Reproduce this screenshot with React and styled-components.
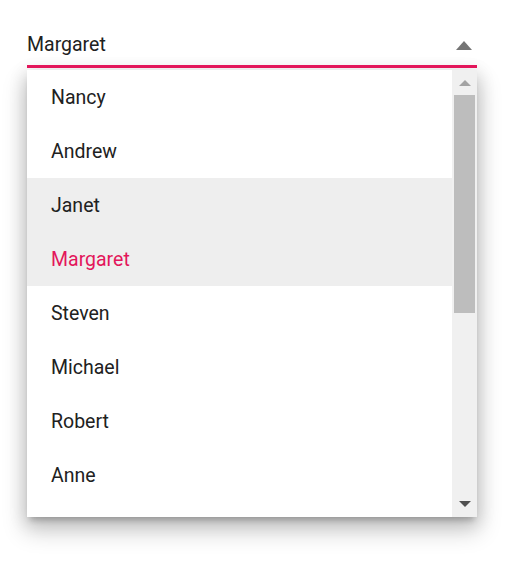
import React from "react";
import styled, { createGlobalStyle } from "styled-components";

const Global = createGlobalStyle`
  html, body { margin: 0; padding: 0; background: #fff; }
  body { font-family: Roboto, "Liberation Sans", sans-serif; }
`;

const Page = styled.div`
  width: 516px;
  height: 567px;
  padding: 27px 39px 0 27px;
  box-sizing: border-box;
  display: flex;
  flex-direction: column;
`;

const Field = styled.div`
  position: relative;
  z-index: 1;
  display: flex;
  flex-direction: column;
`;

const Input = styled.div`
  height: 38px;
  display: flex;
  align-items: center;
  justify-content: space-between;
  box-sizing: border-box;
  padding-bottom: 2px;
`;

const Underline = styled.div`
  height: 3px;
  background: #e3165b;
`;

const Value = styled.span`
  font-size: 19.5px;
  color: #212121;
  line-height: 24px;
`;

const Caret = styled.span`
  width: 0;
  height: 0;
  margin-right: 5px;
  border-left: 8px solid transparent;
  border-right: 8px solid transparent;
  border-bottom: 9px solid #757575;
`;

const Popup = styled.div`
  margin-top: 2px;
  height: 447px;
  display: flex;
  background: #fff;
  box-shadow: 0 12px 22px 2px rgba(0,0,0,0.2), 0 4px 16px 2px rgba(0,0,0,0.12), 0 6px 6px -3px rgba(0,0,0,0.2);
  overflow: hidden;
`;

const List = styled.ul`
  flex: 1;
  margin: 0;
  padding: 0;
  list-style: none;
`;

const Item = styled.li`
  height: 54px;
  display: flex;
  align-items: center;
  padding-left: 24px;
  font-size: 19.5px;
  color: ${p => (p.$selected ? "#e3165b" : "#212121")};
  background: ${p => (p.$shaded ? "#eeeeee" : "#fff")};
`;

const Scrollbar = styled.div`
  width: 25px;
  background: #f0f0f0;
  display: flex;
  flex-direction: column;
  align-items: center;
  padding: 0 2px 0 2px;
  box-sizing: border-box;
`;

const ArrowBtn = styled.div`
  height: 25px;
  width: 100%;
  display: flex;
  align-items: center;
  justify-content: center;
  flex-shrink: 0;
`;

const Tri = styled.span`
  width: 0;
  height: 0;
  border-left: 6px solid transparent;
  border-right: 6px solid transparent;
  ${p => p.$down
    ? `border-top: 6px solid #505050; margin-top: -1px;`
    : `border-bottom: 6px solid #a3a3a3; margin-top: 1px;`}
`;

const Track = styled.div`
  flex: 1;
  width: 100%;
`;

const Thumb = styled.div`
  width: 21px;
  height: 218px;
  background: #bdbdbd;
`;

const names = ["Nancy", "Andrew", "Janet", "Margaret", "Steven", "Michael", "Robert", "Anne"];

export default function App() {
  return (
    <>
      <Global />
      <Page>
        <Field>
          <Input>
            <Value>Margaret</Value>
            <Caret />
          </Input>
          <Underline />
        </Field>
        <Popup>
          <List>
            {names.map(n => (
              <Item key={n} $shaded={n === "Janet" || n === "Margaret"} $selected={n === "Margaret"}>
                {n}
              </Item>
            ))}
          </List>
          <Scrollbar>
            <ArrowBtn><Tri /></ArrowBtn>
            <Track><Thumb /></Track>
            <ArrowBtn><Tri $down /></ArrowBtn>
          </Scrollbar>
        </Popup>
      </Page>
    </>
  );
}
